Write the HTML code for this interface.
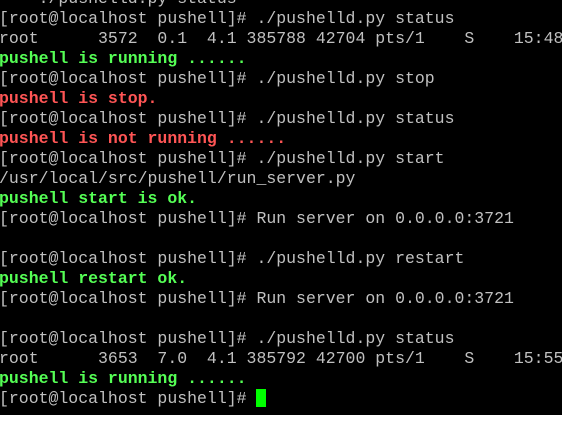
<!DOCTYPE html>
<html><head><style>
html,body{margin:0;padding:0;background:#fff;width:569px;height:429px;overflow:hidden}
#t{position:absolute;left:0;top:0;width:562px;height:415px;background:#000;overflow:hidden}
pre{position:absolute;left:-1px;top:-11px;margin:0;font-family:"Liberation Mono",monospace;font-size:16.5px;line-height:20px;color:#c0c0c0;white-space:pre}
.g{color:#55ff55;font-weight:bold}
.r{color:#ff5555;font-weight:bold}
.c{display:inline-block;width:10px;height:18px;background:#00ff00;vertical-align:-4px}
</style></head><body><div id="t"><pre>    ./pushelld.py status
[root@localhost pushell]# ./pushelld.py status
root      3572  0.1  4.1 385788 42704 pts/1    S    15:48
<span class="g">pushell is running ......</span>
[root@localhost pushell]# ./pushelld.py stop
<span class="r">pushell is stop.</span>
[root@localhost pushell]# ./pushelld.py status
<span class="r">pushell is not running ......</span>
[root@localhost pushell]# ./pushelld.py start
/usr/local/src/pushell/run_server.py
<span class="g">pushell start is ok.</span>
[root@localhost pushell]# Run server on 0.0.0.0:3721

[root@localhost pushell]# ./pushelld.py restart
<span class="g">pushell restart ok.</span>
[root@localhost pushell]# Run server on 0.0.0.0:3721

[root@localhost pushell]# ./pushelld.py status
root      3653  7.0  4.1 385792 42700 pts/1    S    15:55
<span class="g">pushell is running ......</span>
[root@localhost pushell]# <span class="c"></span></pre></div></body></html>
